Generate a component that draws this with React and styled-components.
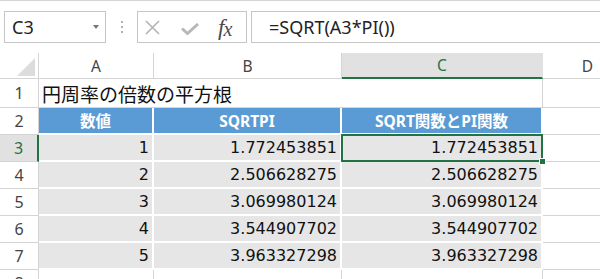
import { Fragment } from "react"
import styled, { createGlobalStyle, css } from "styled-components"

const GREEN = "#217346"
const GRID = "#d4d4d4"

const GlobalStyle = createGlobalStyle`
	html, body {
		margin: 0;
		padding: 0;
		background: #fff;
		overflow: hidden;
	}
`

const Page = styled.div`
	width: 600px;
	height: 279px;
	overflow: hidden;
	background: #fff;
`

const FormulaBar = styled.div`
	display: flex;
	align-items: flex-start;
	height: 53px;
	box-sizing: border-box;
	border-top: 1px solid #d5d5d5;
	padding-top: 10px;
	font-family: "Noto Sans", "Liberation Sans", sans-serif;
`

const Box = styled.div`
	box-sizing: border-box;
	height: 32px;
	border: 1px solid #c6c6c6;
	display: flex;
	align-items: center;
	background: #fff;
`

const NameBox = styled(Box)`
	margin-left: 4px;
	width: 102px;
	padding-left: 7px;
	font-size: 18px;
	color: #222;
`

const Caret = styled.span`
	margin-left: auto;
	margin-right: 6px;
	width: 0;
	height: 0;
	border-top: 4px solid #777;
	border-left: 3.5px solid transparent;
	border-right: 3.5px solid transparent;
`

const Dots = styled.div`
	width: 31px;
	height: 32px;
	display: flex;
	align-items: center;
	justify-content: center;
`

const FxBox = styled(Box)`
	width: 110px;
	padding-left: 7px;
`

const Fx = styled.span`
	margin-left: 19px;
	font-family: "Liberation Serif", "DejaVu Serif", serif;
	font-style: italic;
	font-size: 23px;
	color: #4a4a4a;
	letter-spacing: -1px;
	line-height: 1;
	sub {
		font-size: 20px;
		vertical-align: -1px;
	}
`

const FormulaInput = styled(Box)`
	margin-left: 4px;
	flex: 1;
	border-right: none;
	padding-left: 17px;
	font-size: 18px;
	color: #222;
`

const Sheet = styled.div`
	display: grid;
	grid-template-columns: 39px 115px 188px 201px 90px;
	grid-template-rows: 26px 29px repeat(7, 27px);
	font-family: "Noto Sans", "Liberation Sans", sans-serif;
`

const cellBase = css`
	box-sizing: border-box;
	display: flex;
	align-items: center;
	min-width: 0;
	white-space: nowrap;
`

const Corner = styled.div`
	${cellBase};
	justify-content: flex-end;
	align-items: flex-end;
	padding: 0 3px 2px 0;
	border-right: 1px solid ${GRID};
	border-bottom: 1px solid ${GRID};
	&::after {
		content: "";
		width: 0;
		height: 0;
		border-left: 18px solid transparent;
		border-bottom: 18px solid #dcdcdc;
	}
`

const ColHead = styled.div`
	${cellBase};
	justify-content: center;
	font-size: 15.5px;
	color: ${(p) => (p.$active ? GREEN : "#444")};
	background: ${(p) => (p.$active ? "#e1e1e1" : "#fff")};
	border-right: 1px solid ${(p) => (p.$active ? "#e1e1e1" : GRID)};
	border-bottom: ${(p) => (p.$active ? `2px solid ${GREEN}` : `1px solid ${GRID}`)};
`

const RowHead = styled.div`
	${cellBase};
	justify-content: center;
	font-size: 16px;
	color: ${(p) => (p.$active ? GREEN : "#444")};
	background: ${(p) => (p.$active ? "#e1e1e1" : "#fff")};
	border-right: ${(p) => (p.$active ? `2px solid ${GREEN}` : `1px solid ${GRID}`)};
	border-bottom: 1px solid ${GRID};
`

const Cell = styled.div`
	${cellBase};
	padding-left: 3px;
	font-family: "DejaVu Sans", "Noto Sans CJK JP", sans-serif;
	font-size: ${(p) => p.$size || 16}px;
	color: #111;
	border-right: ${(p) => (p.$overflow ? "none" : `1px solid ${GRID}`)};
	border-bottom: 1px solid ${GRID};
	grid-column: ${(p) => (p.$span ? `span ${p.$span}` : "auto")};
	overflow: visible;
`

const TableHead = styled.div`
	${cellBase};
	justify-content: center;
	background: #5b9bd5;
	color: #fff;
	font-family: "Noto Sans", "Noto Sans CJK JP", sans-serif;
	font-weight: 700;
	font-size: 15.5px;
	border-right: 2px solid #fff;
	border-bottom: 2px solid #fff;
`

const TableCell = styled.div`
	${cellBase};
	position: relative;
	justify-content: flex-end;
	padding-right: 3px;
	background: #e7e6e6;
	color: #111;
	font-family: "DejaVu Sans", "Noto Sans CJK JP", sans-serif;
	font-size: 16px;
	border-right: 2px solid #fff;
	border-bottom: 2px solid #fff;
	${(p) =>
		p.$selected &&
		css`
			&::after {
				content: "";
				position: absolute;
				top: -1px;
				left: -1px;
				right: -2px;
				bottom: -2px;
				border: 2px solid ${GREEN};
			}
			&::before {
				content: "";
				position: absolute;
				right: -5px;
				bottom: -5px;
				width: 5px;
				height: 5px;
				background: ${GREEN};
				border: 1px solid #fff;
				z-index: 1;
			}
		`}
`

function DotsIcon() {
	return (
		<svg width="4" height="13" viewBox="0 0 4 13">
			<rect x="1" y="0" width="2" height="2" fill="#b0b0b0" />
			<rect x="1" y="5" width="2" height="2" fill="#b0b0b0" />
			<rect x="1" y="10" width="2" height="2" fill="#b0b0b0" />
		</svg>
	)
}

function CancelIcon() {
	return (
		<svg width="15" height="15" viewBox="0 0 15 15">
			<path d="M1 1 L14 14 M14 1 L1 14" stroke="#b3b3b3" strokeWidth="1.6" fill="none" />
		</svg>
	)
}

function EnterIcon() {
	return (
		<svg width="18" height="12" viewBox="0 0 18 12" style={{ marginLeft: 21, marginTop: 4 }}>
			<path d="M1 5.5 L6.5 10.5 L17 1" stroke="#b8b8b8" strokeWidth="3" fill="none" />
		</svg>
	)
}

const rows = [1, 2, 3, 4, 5].map((n) => ({
	n,
	value: Math.sqrt(n * Math.PI).toFixed(9),
}))

export default function App() {
	return (
		<Page>
			<GlobalStyle />
			<FormulaBar>
				<NameBox>
					C3
					<Caret />
				</NameBox>
				<Dots>
					<DotsIcon />
				</Dots>
				<FxBox>
					<CancelIcon />
					<EnterIcon />
					<Fx>
						f<sub>x</sub>
					</Fx>
				</FxBox>
				<FormulaInput>=SQRT(A3*PI())</FormulaInput>
			</FormulaBar>

			<Sheet>
				<Corner />
				<ColHead>A</ColHead>
				<ColHead>B</ColHead>
				<ColHead $active>C</ColHead>
				<ColHead>D</ColHead>

				<RowHead>1</RowHead>
				<Cell $span={2} $overflow $size={19}>
					円周率の倍数の平方根
				</Cell>
				<Cell />
				<Cell />

				<RowHead>2</RowHead>
				<TableHead>数値</TableHead>
				<TableHead>SQRTPI</TableHead>
				<TableHead>SQRT関数とPI関数</TableHead>
				<Cell />

				{rows.map((r) => (
					<Fragment key={r.n}>
						<RowHead $active={r.n === 1}>{r.n + 2}</RowHead>
						<TableCell>{r.n}</TableCell>
						<TableCell>{r.value}</TableCell>
						<TableCell $selected={r.n === 1}>{r.value}</TableCell>
						<Cell />
					</Fragment>
				))}

				<RowHead>8</RowHead>
				<Cell />
				<Cell />
				<Cell />
				<Cell />
			</Sheet>
		</Page>
	)
}
